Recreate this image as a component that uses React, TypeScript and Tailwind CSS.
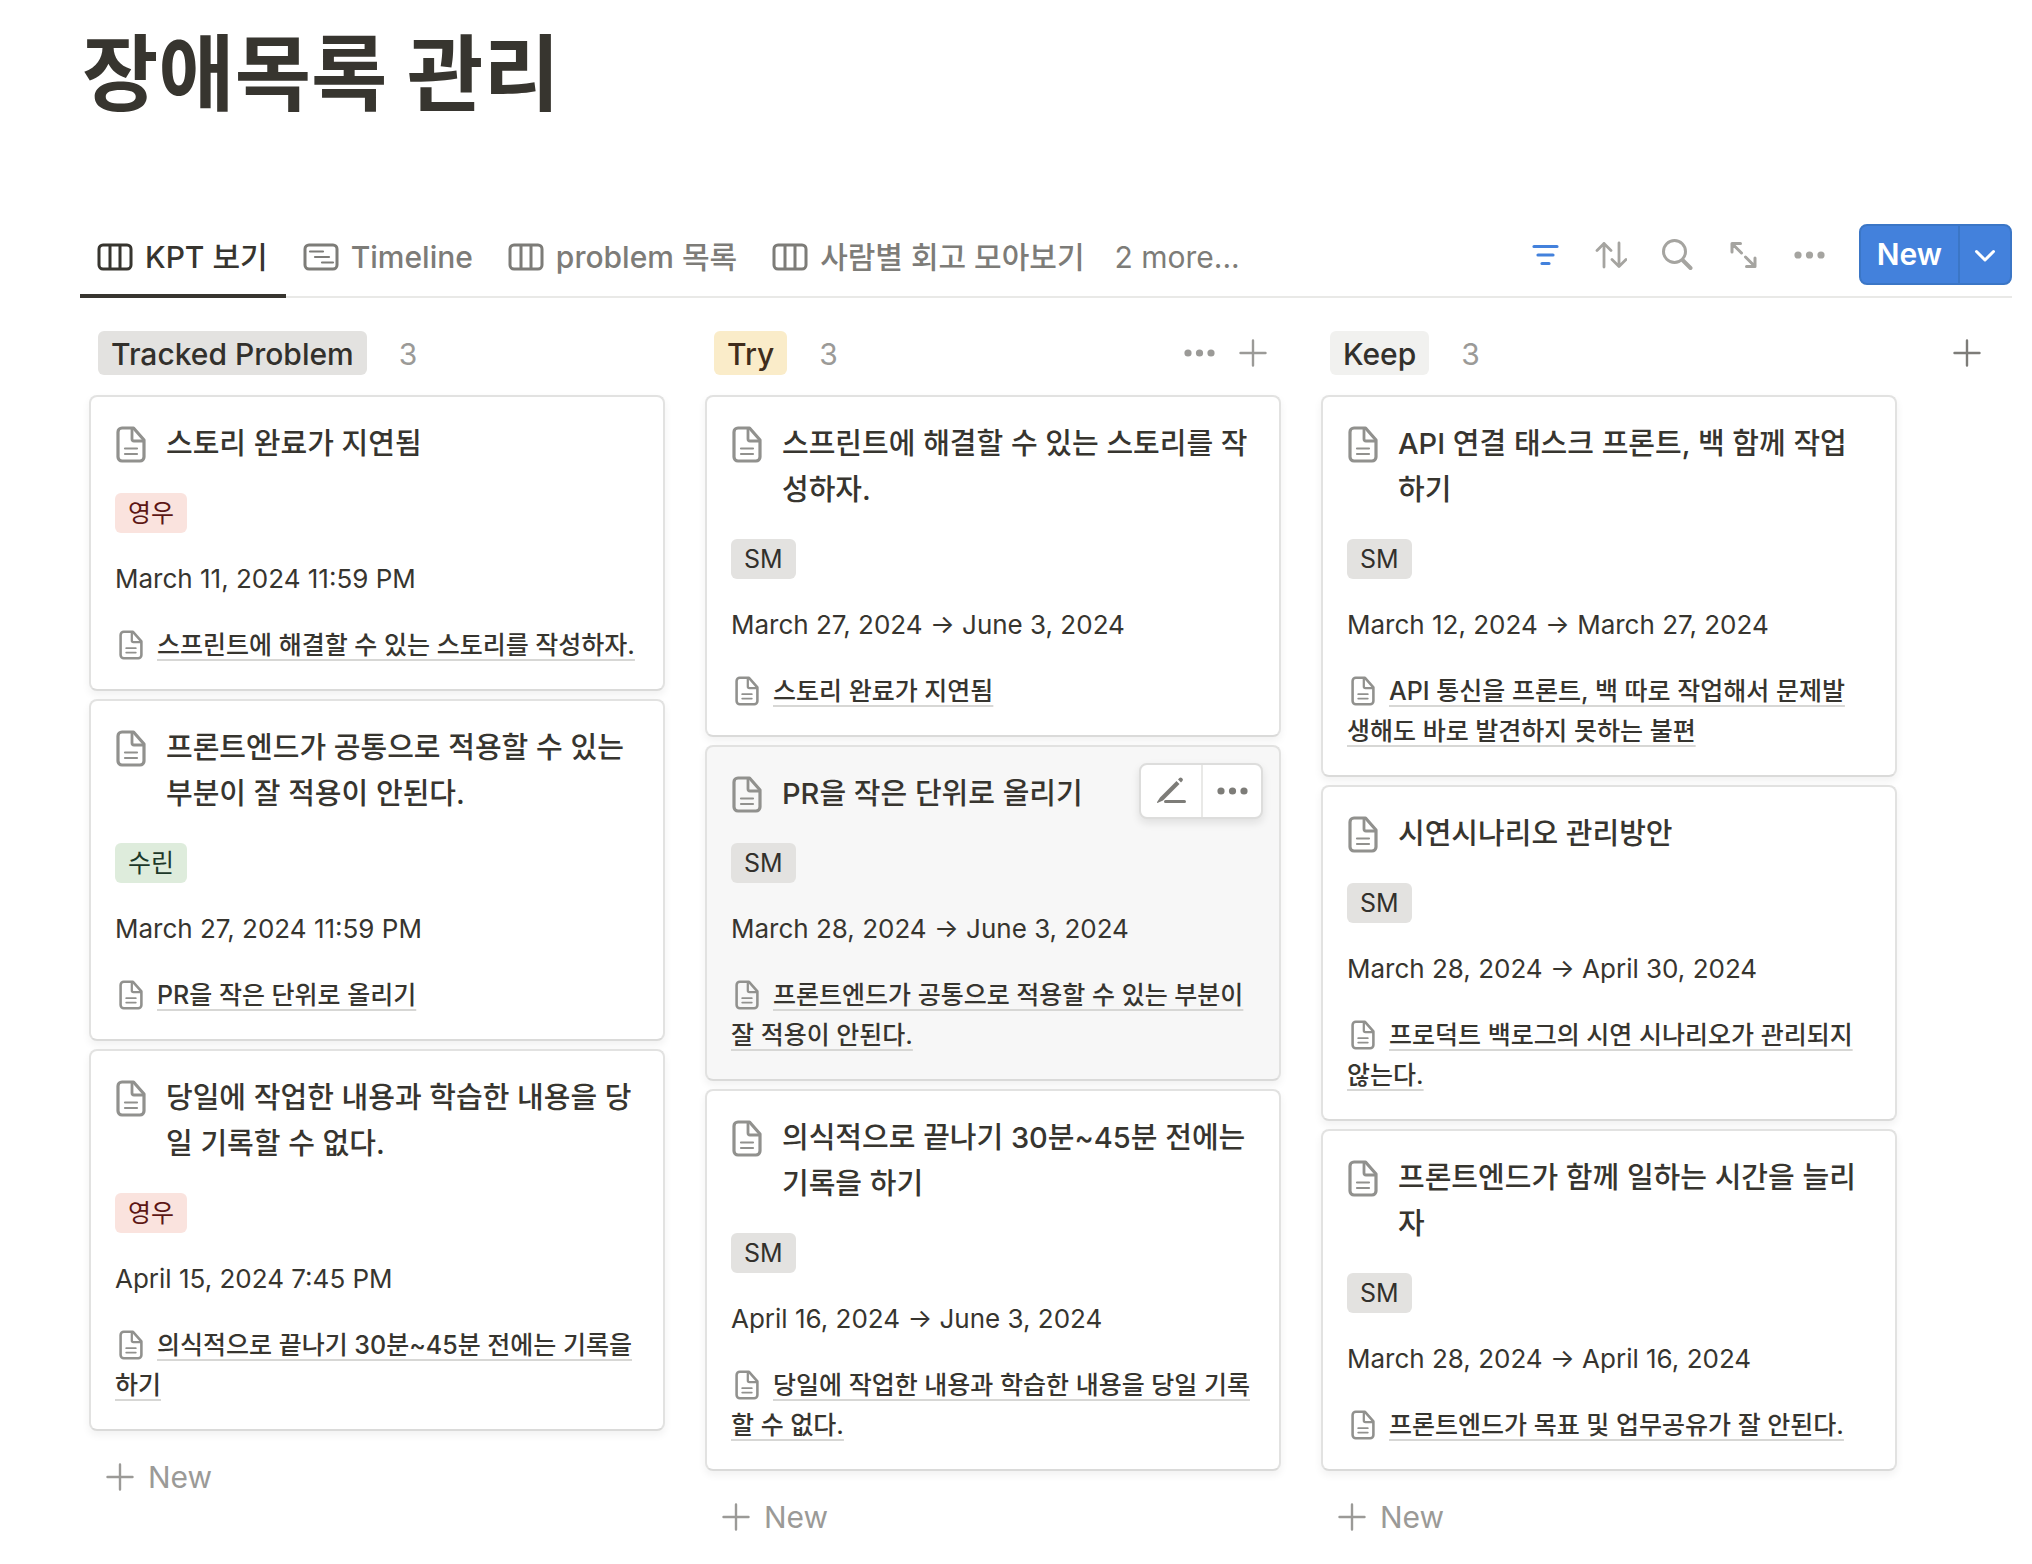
import type { ReactNode } from 'react'
import clsx from 'clsx'

interface CardData {
  title: string
  tag: string
  date: string
  relation: string
  active?: boolean
}

interface ColumnData {
  name: string
  pill: string
  showActions?: boolean
  cards: CardData[]
}

interface ViewTab {
  label: string
  icon: 'board' | 'timeline'
  active?: boolean
}

const tabs: ViewTab[] = [
  { label: 'KPT 보기', icon: 'board', active: true },
  { label: 'Timeline', icon: 'timeline' },
  { label: 'problem 목록', icon: 'board' },
  { label: '사람별 회고 모아보기', icon: 'board' }
]

const tagColors: Record<string, string> = {
  영우: 'bg-[#fae3de] text-[#5d1715]',
  수린: 'bg-[#deecdc] text-[#1c3829]',
  SM: 'bg-[#e3e2e0] text-[#32302c]'
}

const columns: ColumnData[] = [
  {
    name: 'Tracked Problem',
    pill: 'bg-[#e3e2e0] text-[#32302c]',
    cards: [
      {
        title: '스토리 완료가 지연됨',
        tag: '영우',
        date: 'March 11, 2024 11:59 PM',
        relation: '스프린트에 해결할 수 있는 스토리를 작성하자.'
      },
      {
        title: '프론트엔드가 공통으로 적용할 수 있는 부분이 잘 적용이 안된다.',
        tag: '수린',
        date: 'March 27, 2024 11:59 PM',
        relation: 'PR을 작은 단위로 올리기'
      },
      {
        title: '당일에 작업한 내용과 학습한 내용을 당일 기록할 수 없다.',
        tag: '영우',
        date: 'April 15, 2024 7:45 PM',
        relation: '의식적으로 끝나기 30분~45분 전에는 기록을 하기'
      }
    ]
  },
  {
    name: 'Try',
    pill: 'bg-[#faecc9] text-[#402c1b]',
    showActions: true,
    cards: [
      {
        title: '스프린트에 해결할 수 있는 스토리를 작성하자.',
        tag: 'SM',
        date: 'March 27, 2024 → June 3, 2024',
        relation: '스토리 완료가 지연됨'
      },
      {
        title: 'PR을 작은 단위로 올리기',
        tag: 'SM',
        date: 'March 28, 2024 → June 3, 2024',
        relation: '프론트엔드가 공통으로 적용할 수 있는 부분이 잘 적용이 안된다.',
        active: true
      },
      {
        title: '의식적으로 끝나기 30분~45분 전에는 기록을 하기',
        tag: 'SM',
        date: 'April 16, 2024 → June 3, 2024',
        relation: '당일에 작업한 내용과 학습한 내용을 당일 기록할 수 없다.'
      }
    ]
  },
  {
    name: 'Keep',
    pill: 'bg-[#f1f1ef] text-[#32302c]',
    cards: [
      {
        title: 'API 연결 태스크 프론트, 백 함께 작업하기',
        tag: 'SM',
        date: 'March 12, 2024 → March 27, 2024',
        relation: 'API 통신을 프론트, 백 따로 작업해서 문제발\n생해도 바로 발견하지 못하는 불편'
      },
      {
        title: '시연시나리오 관리방안',
        tag: 'SM',
        date: 'March 28, 2024 → April 30, 2024',
        relation: '프로덕트 백로그의 시연 시나리오가 관리되지 않는다.'
      },
      {
        title: '프론트엔드가 함께 일하는 시간을 늘리자',
        tag: 'SM',
        date: 'March 28, 2024 → April 16, 2024',
        relation: '프론트엔드가 목표 및 업무공유가 잘 안된다.'
      }
    ]
  }
]

function BoardIcon() {
  return (
    <svg className="w-9 h-7 shrink-0" viewBox="0 0 36 28" fill="none" stroke="currentColor" strokeWidth="3">
      <rect x="2" y="2" width="32" height="24" rx="4" />
      <path d="M13 2v24M23 2v24" />
    </svg>
  )
}

function TimelineIcon() {
  return (
    <svg className="w-9 h-7 shrink-0" viewBox="0 0 36 28" fill="none" stroke="currentColor" strokeLinecap="round">
      <rect x="2" y="2" width="32" height="24" rx="4" strokeWidth="3" />
      <path d="M7 8.500h13M12 14h14M19 19.500h11" strokeWidth="2.200" />
    </svg>
  )
}

function PageIcon({ className }: { className: string }) {
  return (
    <svg className={className} viewBox="0 0 30 37" fill="none" stroke="currentColor" strokeLinejoin="round">
      <path d="M6 2h11.500L28 14v17a4 4 0 0 1-4 4H6a4 4 0 0 1-4-4V6a4 4 0 0 1 4-4z" strokeWidth="3.200" />
      <path d="M16 2.500V13a2 2 0 0 0 2 2h9.500" strokeWidth="2.800" />
      <path d="M9 22.500h12M9 28h12" strokeWidth="2.200" strokeLinecap="round" />
    </svg>
  )
}

function DotsIcon({ className }: { className?: string }) {
  return (
    <svg className={clsx('w-8 h-8', className)} viewBox="0 0 32 32" fill="currentColor">
      <circle cx="5" cy="16" r="3.600" />
      <circle cx="16.500" cy="16" r="3.600" />
      <circle cx="28" cy="16" r="3.600" />
    </svg>
  )
}

function PlusIcon() {
  return (
    <svg className="w-7 h-7" viewBox="0 0 28 28" fill="none" stroke="currentColor" strokeWidth="2.400" strokeLinecap="round">
      <path d="M14 1.500v25M1.500 14h25" />
    </svg>
  )
}

function FilterIcon() {
  return (
    <svg className="w-8 h-8" viewBox="0 0 32 32" fill="none" stroke="currentColor" strokeWidth="3.200" strokeLinecap="round">
      <path d="M5 7.500h23M9 16h15M13 24.500h7" />
    </svg>
  )
}

function SortIcon() {
  return (
    <svg className="w-8 h-8" viewBox="0 0 32 32" fill="none" stroke="currentColor" strokeWidth="2.800" strokeLinecap="round" strokeLinejoin="round">
      <path d="M9 28V4.500M2 11.500l7-7 7 7M24 4v23.500M17 20.500l7 7 7-7" />
    </svg>
  )
}

function SearchIcon() {
  return (
    <svg className="w-8 h-8" viewBox="0 0 32 32" fill="none" stroke="currentColor" strokeLinecap="round">
      <circle cx="13.500" cy="12.500" r="11" strokeWidth="3" />
      <path d="M22 21.500l7.500 7.500" strokeWidth="4" />
    </svg>
  )
}

function ExpandIcon() {
  return (
    <svg className="w-8 h-8" viewBox="0 0 32 32" fill="none" stroke="currentColor" strokeWidth="3" strokeLinecap="round" strokeLinejoin="round">
      <path d="M5 13V4.500h8.500M5.500 5l9 9M28 19v8.500h-8.500M27.500 27l-9-9" />
    </svg>
  )
}

function EditIcon() {
  return (
    <svg className="w-8 h-8" viewBox="0 0 32 32" fill="currentColor">
      <path d="M5 22.500 21.500 6l3 3L8 25.500l-5 2.300c-.6.300-1.200-.3-.9-.9z" />
      <path d="m23 4.500 1.400-1.400a1.800 1.800 0 0 1 2.500 0l.5.500a1.800 1.800 0 0 1 0 2.500L26 7.500z" />
      <rect x="9" y="25" width="22" height="3" rx="1.500" />
    </svg>
  )
}

function ToolButton({ label, children, blue }: { label: string; children: ReactNode; blue?: boolean }) {
  return (
    <button aria-label={label} className={clsx('p-0', blue ? 'text-[#4381dc]' : 'text-[#a5a4a0]')}>
      {children}
    </button>
  )
}

function Card({ card }: { card: CardData }) {
  return (
    <article
      className={clsx(
        'relative rounded-lg border-2 border-[#e2e2e1] border-b-[#dadad9] py-6 pl-6 pr-[26px] shadow-[0_4px_8px_rgba(15,15,15,0.06)]',
        card.active ? 'bg-[#f7f7f7]' : 'bg-white'
      )}
    >
      <div className="flex">
        <PageIcon className="w-[30px] h-[37px] mt-[5px] ml-px mr-5 shrink-0 text-[#91918e]" />
        <h3 className="text-[29px] leading-[46px] font-medium">{card.title}</h3>
      </div>
      <div className="mt-[26px] flex">
        <span className={clsx('rounded-md px-[13px] text-[25px] leading-10', tagColors[card.tag])}>{card.tag}</span>
      </div>
      <p className="mt-[26px] text-[26px] leading-10">{card.date}</p>
      <p className="mt-[26px] text-[25px] leading-10 font-medium whitespace-pre-line">
        <PageIcon className="inline-block align-middle w-6 h-[30px] ml-1 mr-[14px] mb-1 text-[#91918e]" />
        <a href="#" className="underline decoration-[#d7d7d5] decoration-2 underline-offset-[5px]">
          {card.relation}
        </a>
      </p>

      {/* Hover actions */}
      {card.active && (
        <div className="absolute top-4 right-4 flex h-14 rounded-lg bg-white border-2 border-[#dddddc] shadow-[0_4px_8px_rgba(15,15,15,0.1)] text-[#7d7c78]">
          <button aria-label="Edit" className="w-[62px] flex items-center justify-center border-r-2 border-[#e9e9e7]">
            <EditIcon />
          </button>
          <button aria-label="More" className="w-[58px] flex items-center justify-center">
            <DotsIcon />
          </button>
        </div>
      )}
    </article>
  )
}

function Column({ column }: { column: ColumnData }) {
  return (
    <section className="flex-1 min-w-0">
      <header className="flex items-center h-11 pl-[9px] pr-[14px] mb-5">
        <h2
          className={clsx(
            'rounded-md px-[13px] pt-[2px] text-[30px] leading-[42px] font-medium whitespace-nowrap',
            column.pill
          )}
        >
          {column.name}
        </h2>
        <span className="ml-8 pt-[2px] text-[30px] leading-[42px] text-[#9b9a97]">{column.cards.length}</span>
        {column.showActions && (
          <div className="ml-auto flex items-center gap-6 text-[#9b9a97]">
            <button aria-label="Group options">
              <DotsIcon className="block" />
            </button>
            <button aria-label="Add card">
              <PlusIcon />
            </button>
          </div>
        )}
      </header>
      <div className="flex flex-col gap-2">
        {column.cards.map((card) => (
          <Card key={card.title} card={card} />
        ))}
      </div>
      <button className="mt-6 ml-[17px] flex items-center gap-[14px] text-[30px] leading-[44px] text-[#9b9a97]">
        <PlusIcon />
        New
      </button>
    </section>
  )
}

export default function App() {
  return (
    <main className="min-h-screen bg-white pb-6 text-[#37352f] font-['Inter','Noto_Sans_CJK_KR',sans-serif]">
      <h1 className="pl-[82px] pt-[14px] text-[83px] leading-[120px] font-bold">장애목록 관리</h1>

      <nav className="mt-[82px] ml-20 mr-5 flex items-stretch h-[82px] shadow-[inset_0_-2px_0_#e9e9e7]">
        {tabs.map((tab) => (
          <button
            key={tab.label}
            className={clsx(
              'flex items-center gap-3 pl-[17px] pr-[18px] pt-1 text-[30px] font-medium whitespace-nowrap border-b-4',
              tab.active ? 'border-[#37352f]' : 'border-transparent text-[#7d7c78]'
            )}
          >
            {tab.icon === 'board' ? <BoardIcon /> : <TimelineIcon />}
            {tab.label}
          </button>
        ))}
        <button className="pl-3 text-[30px] text-[#7d7c78] whitespace-nowrap">2 more...</button>

        <div className="ml-auto flex items-center gap-[34px] pb-[5px]">
          <ToolButton label="Filter" blue>
            <FilterIcon />
          </ToolButton>
          <ToolButton label="Sort">
            <SortIcon />
          </ToolButton>
          <ToolButton label="Search">
            <SearchIcon />
          </ToolButton>
          <ToolButton label="Expand">
            <ExpandIcon />
          </ToolButton>
          <ToolButton label="More options">
            <DotsIcon />
          </ToolButton>
          <div className="flex h-[61px] rounded-lg border-2 border-[#3b76c6] bg-[#4381dc] text-white">
            <button className="px-4 text-[30px] font-semibold">New</button>
            <button aria-label="New options" className="w-[52px] flex items-center justify-center border-l-2 border-[#3b76c6]">
              <svg className="w-6 h-6" viewBox="0 0 24 24" fill="none" stroke="currentColor" strokeWidth="3" strokeLinecap="round" strokeLinejoin="round">
                <path d="M3.500 8.500 12 17l8.500-8.500" />
              </svg>
            </button>
          </div>
        </div>
      </nav>

      <div className="mt-[33px] pl-[89px] pr-[35px] flex items-start gap-10">
        {columns.map((column) => (
          <Column key={column.name} column={column} />
        ))}
        <button aria-label="Add group" className="w-[60px] h-11 flex items-center justify-center text-[#7d7c78]">
          <PlusIcon />
        </button>
      </div>
    </main>
  )
}
